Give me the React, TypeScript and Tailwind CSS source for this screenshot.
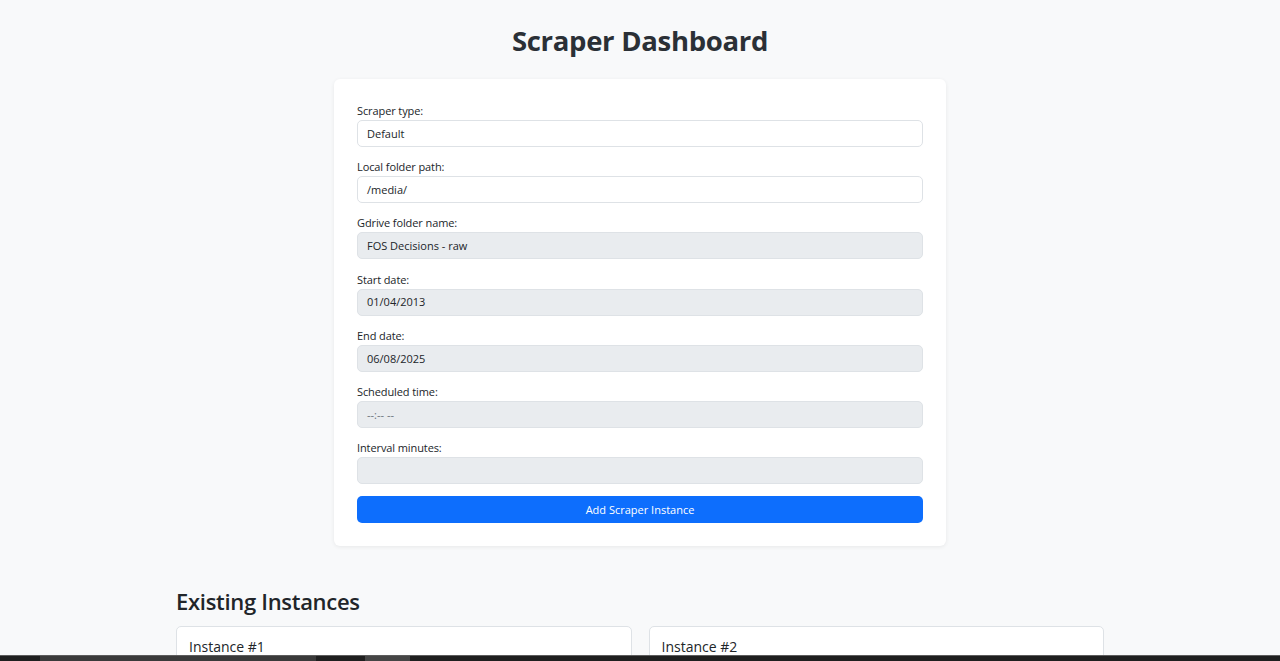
const FIELDS: { label: string; value: string; disabled: boolean; muted?: boolean }[] = [
  { label: "Scraper type:", value: "Default", disabled: false },
  { label: "Local folder path:", value: "/media/", disabled: false },
  { label: "Gdrive folder name:", value: "FOS Decisions - raw", disabled: true },
  { label: "Start date:", value: "01/04/2013", disabled: true },
  { label: "End date:", value: "06/08/2025", disabled: true },
  { label: "Scheduled time:", value: "--:-- --", disabled: true, muted: true },
  { label: "Interval minutes:", value: "", disabled: true },
];

export default function App() {
  return (
    <div className="h-[661px] flex flex-col bg-[#f8f9fa] text-[#212529] font-['Open_Sans','Noto_Sans',sans-serif] overflow-hidden">
      <div className="flex-1 overflow-hidden">
        {/* Title */}
        <h1 className="pt-[23px] text-center text-[27.5px] leading-[36px] font-bold tracking-[-0.3px] text-[#2b3036]">
          Scraper Dashboard
        </h1>

        {/* Add instance form */}
        <div className="mt-[20px] mx-auto w-[612px] bg-white rounded-[6px] shadow-[0_1px_4px_rgba(0,0,0,0.07)] px-[23px] pt-[24px] pb-[23px]">
          {FIELDS.map((f) => (
            <div key={f.label} className="mb-[12.2px]">
              <label className="block text-[11px] leading-[16px] mb-[1px] tracking-[-0.1px]">{f.label}</label>
              <div
                className={`h-[27px] rounded-[5px] border border-[#dee2e6] px-[9px] pt-[1px] flex items-center text-[11px] ${
                  f.disabled ? "bg-[#e9ecef]" : "bg-white"
                } ${f.muted ? "text-[#6c757d]" : "text-[#212529]"}`}
              >
                {f.value}
              </div>
            </div>
          ))}
          <button className="w-full h-[27px] rounded-[5px] bg-[#0d6efd] text-white text-[11px] pt-[1px] flex items-center justify-center">
            Add Scraper Instance
          </button>
        </div>

        {/* Existing instances */}
        <div className="mx-auto w-[928px] mt-[41px]">
          <h2 className="text-[22px] leading-[29px] font-semibold tracking-[-0.3px] mb-[10px]">Existing Instances</h2>
          <div className="grid grid-cols-2 gap-[17px]">
            {["Instance #1", "Instance #2"].map((t) => (
              <div key={t} className="h-[40px] bg-white border border-[#dee2e6] rounded-[5px] px-[12px] pt-[12px]">
                <h5 className="text-[14px] leading-[16px] font-medium">{t}</h5>
              </div>
            ))}
          </div>
        </div>
      </div>

      {/* Taskbar strip */}
      <div className="h-[6px] shrink-0 border-t border-[#5c5c5c] bg-[#1f1f1f] flex">
        <div className="ml-[40px] w-[276px] bg-[#3a3a3a]" />
        <div className="ml-[49px] w-[45px] bg-[#454545]" />
      </div>
    </div>
  );
}
